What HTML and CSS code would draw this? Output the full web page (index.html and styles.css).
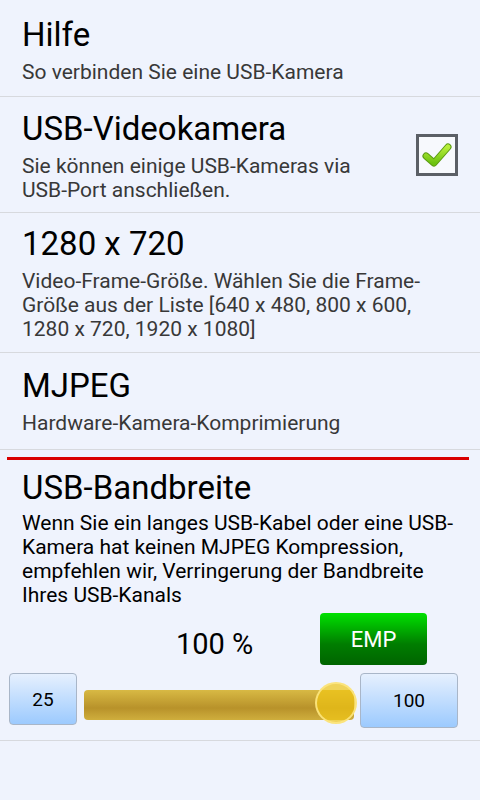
FILE: index.html
```html
<!DOCTYPE html>
<html lang="de">
<head>
<meta charset="utf-8">
<link rel="stylesheet" href="styles.css">
</head>
<body>
<div class="screen">
  <div class="item i1">
    <div class="text">
      <div class="title">Hilfe</div>
      <div class="sub">So verbinden Sie eine USB-Kamera</div>
    </div>
  </div>
  <div class="item i2">
    <div class="text">
      <div class="title">USB-Videokamera</div>
      <div class="sub">Sie können einige USB-Kameras via<br>USB-Port anschließen.</div>
    </div>
    <div class="checkbox">
      <svg width="36" height="36" viewBox="0 0 36 36">
        <defs>
          <linearGradient id="g" x1="0" y1="0" x2="0" y2="1">
            <stop offset="0" stop-color="#b8ef3a"/>
            <stop offset="1" stop-color="#6cc210"/>
          </linearGradient>
        </defs>
        <path d="M7 19 L15 26 L29 10" fill="none" stroke="#5a9a12" stroke-width="7" stroke-linecap="round" stroke-linejoin="round"/>
        <path d="M7 19 L15 26 L29 10" fill="none" stroke="url(#g)" stroke-width="5" stroke-linecap="round" stroke-linejoin="round"/>
      </svg>
    </div>
  </div>
  <div class="item i3">
    <div class="text">
      <div class="title">1280 x 720</div>
      <div class="sub">Video-Frame-Größe. Wählen Sie die Frame-<br>Größe aus der Liste [640 x 480, 800 x 600,<br>1280 x 720, 1920 x 1080]</div>
    </div>
  </div>
  <div class="item i4">
    <div class="text">
      <div class="title">MJPEG</div>
      <div class="sub">Hardware-Kamera-Komprimierung</div>
    </div>
  </div>
  <div class="bw">
    <div class="redline"></div>
    <div class="title bw-title">USB-Bandbreite</div>
    <div class="desc">Wenn Sie ein langes USB-Kabel oder eine USB-<br>Kamera hat keinen MJPEG Kompression,<br>empfehlen wir, Verringerung der Bandbreite<br>Ihres USB-Kanals</div>
    <div class="value-row">
      <div class="value">100 %</div>
      <div class="emp">EMP</div>
    </div>
    <div class="slider-row">
      <div class="btn small">25</div>
      <div class="track">
        <div class="thumb"></div>
      </div>
      <div class="btn big">100</div>
    </div>
  </div>
</div>
</body>
</html>
```

FILE: styles.css
```css
html, body {
  margin: 0;
  padding: 0;
}
body {
  width: 480px;
  height: 800px;
  background: #eff3fd;
  font-family: Roboto, "Noto Sans", sans-serif;
  color: #000;
  overflow: hidden;
}
.screen {
  display: flex;
  flex-direction: column;
}
.item {
  display: flex;
  align-items: flex-start;
  padding: 15px 22px 0 22px;
  border-bottom: 1px solid #d7d9de;
  box-sizing: border-box;
}
.item.i1 {
  height: 97px;
  padding-top: 17px;
}
.item.i2 {
  height: 116px;
  padding-top: 14px;
}
.item.i3 {
  height: 140px;
  padding-top: 13px;
}
.item.i4 {
  height: 97px;
  padding-top: 15px;
}
.text {
  flex: 1;
  display: flex;
  flex-direction: column;
  gap: 7px;
  white-space: nowrap;
}
.title {
  font-size: 33px;
  line-height: 36px;
  color: #000;
}
.sub {
  font-size: 21px;
  line-height: 24px;
  color: #383838;
}
.checkbox {
  width: 36px;
  height: 36px;
  margin-top: 23px;
  border: 3px solid #5b5f66;
  background: #f7f9fd;
  display: flex;
  align-items: center;
  justify-content: center;
}
.bw {
  display: flex;
  flex-direction: column;
  padding: 7px 0 12px 0;
  border-bottom: 1px solid #d7d9de;
}
.redline {
  height: 3px;
  background: #d90000;
  margin: 0 11px 0 7px;
}
.bw-title {
  margin: 10px 22px 0 22px;
}
.desc {
  font-size: 21px;
  line-height: 24px;
  margin: 5px 22px 0 22px;
  white-space: nowrap;
}
.value-row {
  display: flex;
  align-items: flex-start;
  margin-top: 6px;
  height: 52px;
}
.value {
  font-size: 29px;
  line-height: 52px;
  margin-top: 5px;
  margin-left: 176px;
  width: 144px;
}
.emp {
  width: 107px;
  height: 52px;
  border-radius: 4px;
  background: linear-gradient(#00e100, #007d00 60%, #006400);
  color: #fff;
  font-size: 22px;
  display: flex;
  align-items: center;
  justify-content: center;
}
.slider-row {
  display: flex;
  align-items: flex-start;
  margin-top: 8px;
  padding-left: 9px;
}
.btn {
  height: 52px;
  border: 1px solid #a9b6c8;
  border-radius: 4px;
  background: linear-gradient(#e6f0fe, #9ccafe);
  box-sizing: border-box;
  display: flex;
  align-items: center;
  justify-content: center;
  font-size: 19px;
}
.btn.small {
  width: 68px;
}
.btn.big {
  width: 98px;
  height: 55px;
}
.track {
  position: relative;
  width: 270px;
  height: 30px;
  margin: 17px 6px 0 7px;
  border-radius: 4px;
  background: linear-gradient(#d8b944, #b8922a 60%, #cfae3d);
}
.thumb {
  position: absolute;
  right: -3px;
  top: -8px;
  width: 38px;
  height: 38px;
  border-radius: 50%;
  background: rgba(240, 196, 20, 0.7);
  border: 2px solid rgba(252, 230, 130, 0.9);
}
```
